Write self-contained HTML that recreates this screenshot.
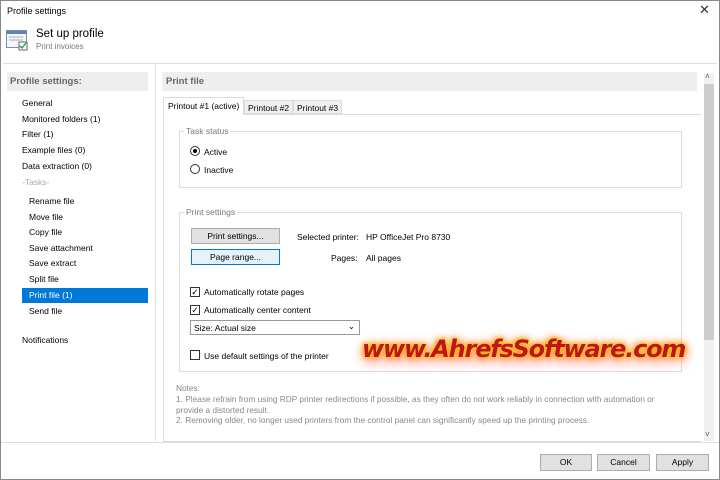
<!DOCTYPE html>
<html><head><style>
*{margin:0;padding:0;box-sizing:border-box}
body{width:720px;height:480px;overflow:hidden;background:#fff;font-family:"Liberation Sans",sans-serif;font-size:8.5px;color:#000;position:relative}
.a{position:absolute;white-space:nowrap}
.btn{position:absolute;background:#e1e1e1;border:1px solid #adadad;text-align:center;line-height:14px}
.grp{position:absolute;border:1px solid #dcdcdc}
.gl{position:absolute;top:-6px;left:4px;background:#fff;padding:0 2px;color:#777}
.rad{position:absolute;width:10px;height:10px;border:1px solid #333;border-radius:50%}
.chk{position:absolute;width:10px;height:10px;border:1px solid #333;font-size:9px;line-height:8px;text-align:center}
</style></head><body>
<div class="a" style="left:0;top:0;width:720px;height:480px;border:1px solid #888"></div>
<div class="a" style="left:7px;top:6px;font-size:9px">Profile settings</div>
<div class="a" style="left:699px;top:2px;font-size:13px;color:#333">✕</div>
<svg class="a" style="left:6px;top:29px" width="22" height="22"><rect x="0.5" y="1.5" width="20" height="17" fill="#f4f8fc" stroke="#7a8ea8"/><rect x="1" y="2" width="19" height="3" fill="#5e82b8"/><line x1="3" y1="8" x2="17" y2="8" stroke="#aab"/><line x1="3" y1="11" x2="17" y2="11" stroke="#aab"/><rect x="13" y="13" width="8" height="8" fill="#fff" stroke="#666"/><path d="M14 17 l2 2 l4 -5" stroke="#2a9a3a" fill="none" stroke-width="1.4"/></svg>
<div class="a" style="left:36px;top:28px;font-size:11.5px">Set up profile</div>
<div class="a" style="left:36px;top:42px;font-size:8px;color:#777">Print invoices</div>
<div class="a" style="left:3px;top:63px;width:714px;height:1px;background:#ddd"></div>
<div class="a" style="left:155px;top:64px;width:1px;height:377px;background:#e4e4e4"></div>
<div class="a" style="left:7px;top:72px;width:141px;height:19px;background:#eee;font-weight:bold;color:#666;font-size:9.5px;padding:4px 3px">Profile settings:</div>
<div class="a" style="left:22px;top:96px;line-height:15.7px">General<br>Monitored folders (1)<br>Filter (1)<br>Example files (0)<br>Data extraction (0)<br><span style="color:#aaa">-Tasks-</span></div>
<div class="a" style="left:29px;top:194px;line-height:15.6px">Rename file<br>Move file<br>Copy file<br>Save attachment<br>Save extract<br>Split file</div>
<div class="a" style="left:22px;top:288px;width:126px;height:15px;background:#0078d7;color:#fff;padding:2px 7px">Print file (1)</div>
<div class="a" style="left:29px;top:306px">Send file</div>
<div class="a" style="left:22px;top:335px">Notifications</div>
<div class="a" style="left:162px;top:72px;width:535px;height:19px;background:#eee;font-weight:bold;color:#666;font-size:9.5px;padding:4px 4px">Print file</div>
<div class="a" style="left:163px;top:114px;width:538px;height:328px;border:1px solid #dcdcdc;border-right:none"></div>
<div class="a" style="left:163px;top:97px;width:81px;height:18px;border:1px solid #dcdcdc;border-bottom:none;background:#fff;padding:3px 4px">Printout #1 (active)</div>
<div class="a" style="left:244px;top:100px;width:49px;height:14px;border:1px solid #dcdcdc;background:#f0f0f0;padding:2px 3px">Printout #2</div>
<div class="a" style="left:293px;top:100px;width:49px;height:14px;border:1px solid #dcdcdc;background:#f0f0f0;padding:2px 3px">Printout #3</div>
<div class="grp" style="left:179px;top:131px;width:503px;height:57px"><span class="gl">Task status</span></div>
<div class="rad" style="left:190px;top:146px"><div style="width:4px;height:4px;background:#000;border-radius:50%;margin:2px"></div></div>
<div class="a" style="left:204px;top:147px">Active</div>
<div class="rad" style="left:190px;top:164px"></div>
<div class="a" style="left:204px;top:165px">Inactive</div>
<div class="grp" style="left:179px;top:212px;width:503px;height:160px"><span class="gl">Print settings</span></div>
<div class="btn" style="left:191px;top:228px;width:89px;height:16px">Print settings...</div>
<div class="btn" style="left:191px;top:249px;width:89px;height:16px;border-color:#0078d7;background:#e5f1fb">Page range...</div>
<div class="a" style="left:297px;top:232px">Selected printer:</div>
<div class="a" style="left:366px;top:232px">HP OfficeJet Pro 8730</div>
<div class="a" style="left:331px;top:253px">Pages:</div>
<div class="a" style="left:366px;top:253px">All pages</div>
<div class="chk" style="left:190px;top:287px">✓</div><div class="a" style="left:204px;top:287px">Automatically rotate pages</div>
<div class="chk" style="left:190px;top:305px">✓</div><div class="a" style="left:204px;top:305px">Automatically center content</div>
<div class="a" style="left:190px;top:320px;width:170px;height:15px;border:1px solid #999;background:#fff;padding:2px 3px">Size: Actual size<span style="position:absolute;right:4px;top:0">⌄</span></div>
<div class="chk" style="left:190px;top:350px"></div><div class="a" style="left:204px;top:351px">Use default settings of the printer</div>
<div class="a" style="left:176px;top:383px;color:#888;font-size:8.3px;line-height:10.8px">Notes:<br>1. Please refrain from using RDP printer redirections if possible, as they often do not work reliably in connection with automation or<br>provide a distorted result.<br>2. Removing older, no longer used printers from the control panel can significantly speed up the printing process.</div>
<div class="a" style="left:704px;top:73px;width:10px;height:368px;background:#f0f0f0"></div>
<div class="a" style="left:704px;top:84px;width:10px;height:256px;background:#cdcdcd"></div>
<div class="a" style="left:705px;top:72px;font-size:8px;color:#555">˄</div>
<div class="a" style="left:705px;top:430px;font-size:8px;color:#555">˅</div>
<div class="a" style="left:1px;top:442px;width:718px;height:1px;background:#ddd"></div>
<div class="btn" style="left:540px;top:454px;width:52px;height:17px">OK</div>
<div class="btn" style="left:597px;top:454px;width:53px;height:17px">Cancel</div>
<div class="btn" style="left:656px;top:454px;width:53px;height:17px">Apply</div>
<div class="a" style="left:362px;top:335px;font-size:24px;font-weight:bold;font-style:italic;font-family:'DejaVu Sans',sans-serif;color:#c0141a;letter-spacing:-1.2px;text-shadow:0 0 3px #ffd400,0 0 6px #ffa000,0 0 10px #ff7000,0 6px 12px #ff9090">www.AhrefsSoftware.com</div>
</body></html>
